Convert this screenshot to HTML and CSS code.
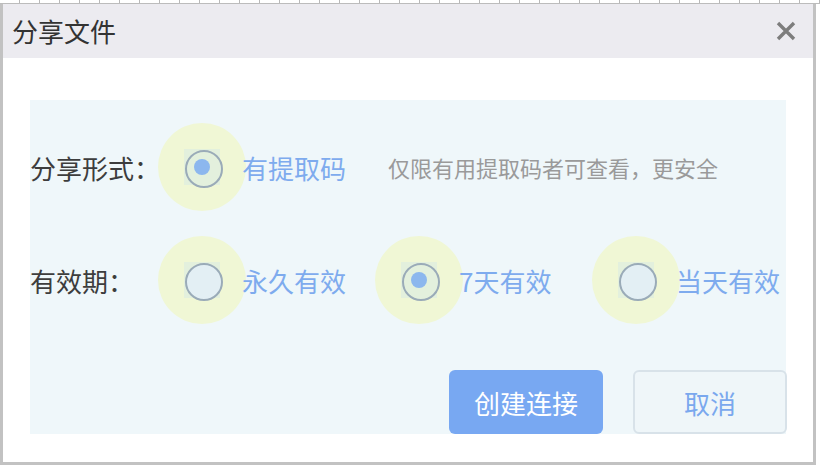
FILE: index.html
```html
<!DOCTYPE html>
<html lang="zh-CN">
<head>
  <meta charset="UTF-8" />
  <title>分享文件</title>
  <link rel="stylesheet" href="styles.css">
</head>
<body>
  <div class="ruler"></div>
  <div class="dialog">
    <div class="dialog-header">
      <span class="dialog-title">分享文件</span>
      <svg class="close" width="22" height="22" viewBox="0 0 22 22">
        <path d="M3 3 L19 19 M19 3 L3 19" stroke="#7d7d7d" stroke-width="3.4" fill="none" />
      </svg>
    </div>
    <div class="dialog-body">
      <div class="panel">
        <div class="row">
          <span class="label">分享形式：</span>
          <label class="option">
            <span class="halo"><span class="radio checked"></span></span>
            <span class="option-text">有提取码</span>
          </label>
          <span class="hint">仅限有用提取码者可查看，更安全</span>
        </div>
        <div class="row">
          <span class="label">有效期：</span>
          <label class="option fixed">
            <span class="halo"><span class="radio"></span></span>
            <span class="option-text">永久有效</span>
          </label>
          <label class="option fixed">
            <span class="halo"><span class="radio checked"></span></span>
            <span class="option-text">7天有效</span>
          </label>
          <label class="option">
            <span class="halo"><span class="radio"></span></span>
            <span class="option-text">当天有效</span>
          </label>
        </div>
        <div class="actions">
          <button class="btn btn-primary">创建连接</button>
          <button class="btn btn-default">取消</button>
        </div>
      </div>
    </div>
  </div>
</body>
</html>
```

FILE: styles.css
```css
* {
  box-sizing: border-box;
}
body {
  margin: 0;
  background-color: #ffffff;
  font-family: "Noto Sans CJK SC", "Noto Sans", sans-serif;
}
.ruler {
  height: 4px;
  background: repeating-linear-gradient(90deg, #ffffff 0, #ffffff 19px, #b8b8b8 19px, #b8b8b8 20px);
  border-bottom: 1px solid #bcbcbc;
}
.dialog {
  width: 816px;
  height: 461px;
  border: 3px solid #c2c2c2;
  border-top: none;
  background-color: #ffffff;
}
.dialog-header {
  height: 54px;
  background-color: #ecebf0;
  display: flex;
  align-items: center;
  justify-content: space-between;
  padding: 0 16px 0 9px;
}
.dialog-title {
  font-size: 26px;
  color: #333333;
  line-height: 1;
}
.close {
  display: block;
}
.dialog-body {
  padding: 42px 27px 0 27px;
}
.panel {
  background-color: #eff7fa;
  height: 334px;
  padding-top: 23px;
  display: flex;
  flex-direction: column;
}
.row {
  display: flex;
  align-items: center;
  height: 88px;
  margin-bottom: 25px;
  white-space: nowrap;
}
.label {
  flex-shrink: 0;
  width: 128px;
  font-size: 26px;
  color: #3d3d3d;
}
.option {
  flex-shrink: 0;
  display: flex;
  align-items: center;
}
.option.fixed {
  width: 217px;
}
.halo {
  flex-shrink: 0;
  width: 88px;
  height: 88px;
  border-radius: 50%;
  background-color: #f0f7d5;
  display: flex;
  align-items: center;
  justify-content: center;
}
.radio {
  width: 36px;
  height: 36px;
  background-color: #e3f0dd;
  position: relative;
}
.radio::before {
  content: "";
  position: absolute;
  left: 1px;
  top: 1px;
  width: 34px;
  height: 34px;
  border-radius: 50%;
  border: 2px solid #9aabb8;
  background-color: #e3eff4;
}
.radio.checked::before {
  background-color: #e3f0dd;
}
.radio.checked::after {
  content: "";
  position: absolute;
  left: 10px;
  top: 10px;
  width: 16px;
  height: 16px;
  border-radius: 50%;
  background-color: #8cb7ee;
}
.option-text {
  margin-left: -4px;
  font-size: 26px;
  color: #7eabee;
}
.hint {
  margin-left: 42px;
  font-size: 22px;
  color: #9a9a9a;
}
.actions {
  margin-top: auto;
  display: flex;
  justify-content: flex-end;
  gap: 30px;
  margin-right: -1px;
}
.btn {
  width: 154px;
  height: 64px;
  border-radius: 6px;
  font-family: inherit;
  font-size: 26px;
}
.btn-primary {
  background-color: #78a8f2;
  border: none;
  color: #ffffff;
}
.btn-default {
  background-color: #eff6f9;
  border: 2px solid #d8e2e9;
  color: #7aa8ee;
}
```
